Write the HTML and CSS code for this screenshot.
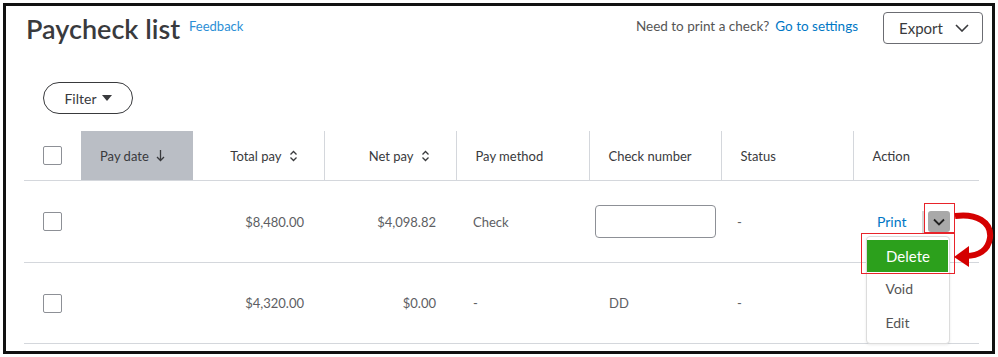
FILE: index.html
```html
<!DOCTYPE html>
<html lang="en">
<head>
  <meta charset="UTF-8">
  <meta name="viewport" content="width=device-width, initial-scale=1.0">
  <title>Paycheck list</title>
  <link rel="stylesheet" href="styles.css">
</head>
<body>
  <div class="frame">
    <div class="top-bar">
      <div class="title-wrap">
        <h1>Paycheck list</h1>
        <a href="#" class="feedback">Feedback</a>
      </div>
      <div class="top-right">
        <span class="hint">Need to print a check?</span>
        <a href="#" class="link">Go to settings</a>
        <button class="export-btn">Export
          <svg width="14" height="8" viewBox="0 0 14 8"><path d="M1 1l6 6 6-6" fill="none" stroke="#393a3d" stroke-width="1.6"/></svg>
        </button>
      </div>
    </div>

    <div class="filter-row">
      <button class="filter-btn">Filter
        <svg width="10" height="6" viewBox="0 0 10 6"><path d="M0 0h10L5 6z" fill="#393a3d"/></svg>
      </button>
    </div>

    <table class="pay-table">
      <colgroup>
        <col style="width:57px"><col style="width:112px"><col style="width:131px"><col style="width:132px">
        <col style="width:133px"><col style="width:132px"><col style="width:132px"><col style="width:126px">
      </colgroup>
      <thead>
        <tr>
          <th class="cb-cell"><span class="checkbox"></span></th>
          <th class="sorted">Pay date
            <svg class="sort-icon" width="9" height="12" viewBox="0 0 9 12"><path d="M4.5 0v10M1 7l3.5 3.5L8 7" fill="none" stroke="#393a3d" stroke-width="1.3"/></svg>
          </th>
          <th class="num sep">Total pay
            <svg class="sort-icon" width="9" height="12" viewBox="0 0 9 12"><path d="M1.5 4.5L4.5 1.5 7.5 4.5M1.5 7.5l3 3 3-3" fill="none" stroke="#393a3d" stroke-width="1.3"/></svg>
          </th>
          <th class="num sep">Net pay
            <svg class="sort-icon" width="9" height="12" viewBox="0 0 9 12"><path d="M1.5 4.5L4.5 1.5 7.5 4.5M1.5 7.5l3 3 3-3" fill="none" stroke="#393a3d" stroke-width="1.3"/></svg>
          </th>
          <th class="sep">Pay method</th>
          <th class="sep">Check number</th>
          <th class="sep">Status</th>
          <th>Action</th>
        </tr>
      </thead>
      <tbody>
        <tr>
          <td class="cb-cell"><span class="checkbox"></span></td>
          <td></td>
          <td class="num">$8,480.00</td>
          <td class="num">$4,098.82</td>
          <td>Check</td>
          <td class="input-cell"><input type="text" class="check-input"></td>
          <td class="status">-</td>
          <td>
            <div class="action">
              <a href="#" class="link print">Print</a>
              <span class="split"></span>
              <div class="menu-wrap">
                <button class="more-btn">
                  <svg width="12" height="8" viewBox="0 0 12 8"><path d="M1 1.5l5 5 5-5" fill="none" stroke="#222" stroke-width="1.8"/></svg>
                </button>
                <ul class="menu">
                  <li class="active">Delete</li>
                  <li>Void</li>
                  <li>Edit</li>
                </ul>
              </div>
            </div>
          </td>
        </tr>
        <tr>
          <td class="cb-cell"><span class="checkbox"></span></td>
          <td></td>
          <td class="num">$4,320.00</td>
          <td class="num">$0.00</td>
          <td>-</td>
          <td class="check-no">DD</td>
          <td class="status">-</td>
          <td></td>
        </tr>
      </tbody>
    </table>
  </div>

  <svg class="marks" width="998" height="357" viewBox="0 0 998 357">
    <rect x="924.5" y="203.5" width="30" height="29" fill="none" stroke="#e8232a" stroke-width="1"/>
    <rect x="861.5" y="233.5" width="93" height="40" fill="none" stroke="#e8232a" stroke-width="1"/>
    <path d="M955 216 C976 213 992 222 990 238 C988 251 978 256 966 256" fill="none" stroke="#d40000" stroke-width="6"/>
    <path d="M954 257 L969 246 L969 267 Z" fill="#d40000"/>
  </svg>
</body>
</html>
```

FILE: styles.css
```css
body {
  margin: 0;
  font-family: Lato, "Open Sans", Arial, sans-serif;
  color: #393a3d;
  background: #fff;
  position: relative;
  width: 998px;
  height: 357px;
  overflow: hidden;
}
.frame {
  margin: 3px;
  width: 986px;
  height: 345px;
  border: 3px solid #111;
  position: relative;
}
.top-bar {
  display: flex;
  justify-content: space-between;
  align-items: flex-start;
  padding: 6px 9px 0 20px;
}
.title-wrap {
  display: flex;
  align-items: baseline;
  gap: 9px;
  padding-top: 1px;
}
h1 {
  margin: 0;
  font-size: 27px;
  font-weight: 600;
  line-height: 32px;
  color: #393a3d;
}
a {
  text-decoration: none;
}
.feedback {
  font-size: 13px;
  color: #2c8fd6;
  position: relative;
  top: -8px;
}
.top-right {
  display: flex;
  align-items: flex-start;
  font-size: 13.5px;
}
.hint {
  color: #555;
  margin-top: 6px;
}
.link {
  color: #0077c5;
}
.top-right .link {
  margin: 6px 0 0 6px;
}
.export-btn {
  margin-left: 25px;
  width: 100px;
  height: 32px;
  border: 1.5px solid #6b6c72;
  border-radius: 4px;
  background: #fff;
  font-family: inherit;
  font-size: 15px;
  font-weight: 400;
  color: #393a3d;
  display: flex;
  align-items: center;
  justify-content: space-between;
  padding: 0 13px 0 15px;
}
.filter-row {
  padding: 37px 0 0 37px;
}
.filter-btn {
  height: 32px;
  width: 90px;
  border: 1.5px solid #393a3d;
  border-radius: 16px;
  background: #fff;
  font-family: inherit;
  font-size: 14px;
  font-weight: 400;
  color: #393a3d;
  display: flex;
  align-items: center;
  justify-content: center;
  gap: 5px;
  padding: 0;
}
.pay-table {
  margin: 17px 0 0 18px;
  width: 955px;
  table-layout: fixed;
  border-collapse: collapse;
  font-size: 13px;
}
.pay-table th {
  height: 49px;
  font-weight: 400;
  text-align: left;
  color: #393a3d;
  padding: 0 19px;
  border-bottom: 1px solid #d4d7dc;
}
.pay-table th.sep {
  border-right: 1px solid #d4d7dc;
}
.pay-table th.sorted {
  background: #babec5;
}
.pay-table th.num {
  text-align: right;
  padding-right: 26px;
}
.sort-icon {
  margin-left: 4px;
  vertical-align: -1px;
}
.pay-table td {
  color: #5d5e63;
  padding: 0 17px;
  border-bottom: 1px solid #d4d7dc;
}
.pay-table tbody tr:first-child td {
  height: 81px;
}
.pay-table tbody tr:last-child td {
  height: 80px;
}
.pay-table td.num {
  text-align: right;
  padding-right: 20px;
}
.pay-table .cb-cell {
  padding: 0 0 0 19px;
}
.pay-table td.check-no {
  padding-left: 20px;
}
.pay-table td.status {
  padding-left: 16px;
}
.checkbox {
  display: block;
  width: 17px;
  height: 17px;
  border: 1px solid #8d9096;
  border-radius: 2px;
}
.pay-table td.input-cell {
  padding: 0 6px;
}
.check-input {
  display: block;
  width: 121px;
  height: 33px;
  box-sizing: border-box;
  border: 1px solid #8d9096;
  border-radius: 4px;
}
.action {
  display: flex;
  align-items: center;
  padding-left: 7px;
}
.print {
  font-size: 14px;
}
.split {
  width: 3px;
  height: 22px;
  background: #d6d6d6;
  margin-left: 16px;
  margin-right: 3px;
}
.menu-wrap {
  position: relative;
}
.more-btn {
  display: flex;
  align-items: center;
  justify-content: center;
  width: 22px;
  height: 21px;
  padding: 0;
  border: none;
  border-radius: 3px;
  background: #a9a9a9;
}
.menu {
  position: absolute;
  top: 25px;
  right: 0;
  width: 84px;
  margin: 0;
  padding: 3px 0 0;
  list-style: none;
  background: #fff;
  border: 1px solid #dcdcdc;
  border-radius: 4px;
  box-shadow: 0 1px 3px rgba(0, 0, 0, 0.08);
  height: 108px;
  box-sizing: border-box;
  font-size: 14px;
  color: #555;
}
.menu li {
  height: 34px;
  line-height: 34px;
  padding-left: 18px;
}
.menu li.active {
  background: #2ca01c;
  color: #fff;
  text-align: center;
  padding-left: 0;
  margin-right: 1px;
  height: 32px;
  line-height: 32px;
  font-size: 15px;
  font-weight: 400;
  margin-bottom: 0;
}
.marks {
  position: absolute;
  left: 0;
  top: 0;
  pointer-events: none;
}
```
